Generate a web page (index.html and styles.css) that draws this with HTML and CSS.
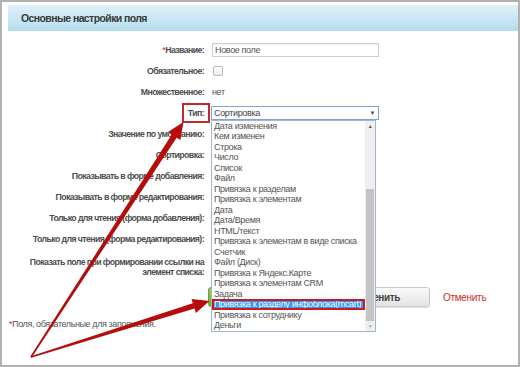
FILE: index.html
```html
<!DOCTYPE html>
<html lang="ru">
<head>
    <meta charset="UTF-8">
    <title>Основные настройки поля</title>
    <link rel="stylesheet" href="styles.css">
</head>
<body>
    <div class="frame">
        <div class="head">Основные настройки поля</div>

        <div class="form">
            <div class="row">
                <div class="label"><span class="req">*</span>Название:</div>
                <div class="value"><div class="input">Новое поле</div></div>
            </div>
            <div class="row">
                <div class="label">Обязательное:</div>
                <div class="value"><span class="check"></span></div>
            </div>
            <div class="row">
                <div class="label">Множественное:</div>
                <div class="value plain">нет</div>
            </div>
            <div class="row">
                <div class="label"><span class="mark">Тип:</span></div>
                <div class="value">
                    <div class="select">
                        <span>Сортировка</span><span class="caret">&#9660;</span>
                        <div class="list">
                            <div class="opts">
                                <div>Дата изменения</div>
                                <div>Кем изменен</div>
                                <div>Строка</div>
                                <div>Число</div>
                                <div>Список</div>
                                <div>Файл</div>
                                <div>Привязка к разделам</div>
                                <div>Привязка к элементам</div>
                                <div>Дата</div>
                                <div>Дата/Время</div>
                                <div>HTML/текст</div>
                                <div>Привязка к элементам в виде списка</div>
                                <div>Счетчик</div>
                                <div>Файл (Диск)</div>
                                <div>Привязка к Яндекс.Карте</div>
                                <div>Привязка к элементам CRM</div>
                                <div>Задача</div>
                                <div class="picked">Привязка к разделу инфоблока(mcart)</div>
                                <div>Привязка к сотруднику</div>
                                <div>Деньги</div>
                            </div>
                            <div class="scroll">
                                <div class="arr">&#9650;</div>
                                <div class="track"><div class="thumb"></div></div>
                                <div class="arr down">&#9660;</div>
                            </div>
                        </div>
                    </div>
                </div>
            </div>
            <div class="row">
                <div class="label">Значение по умолчанию:</div>
                <div class="value"></div>
            </div>
            <div class="row">
                <div class="label">Сортировка:</div>
                <div class="value"></div>
            </div>
            <div class="row">
                <div class="label">Показывать в форме добавления:</div>
                <div class="value"></div>
            </div>
            <div class="row">
                <div class="label">Показывать в форме редактирования:</div>
                <div class="value"></div>
            </div>
            <div class="row">
                <div class="label">Только для чтения (форма добавления):</div>
                <div class="value"></div>
            </div>
            <div class="row">
                <div class="label">Только для чтения (форма редактирования):</div>
                <div class="value"></div>
            </div>
            <div class="row tall">
                <div class="label">Показать поле при формировании ссылки на<br>элемент списка:</div>
                <div class="value"></div>
            </div>
        </div>

        <div class="buttons">
            <button class="btn save">Сохранить</button>
            <button class="btn apply">Применить</button>
            <a class="cancel" href="#">Отменить</a>
        </div>

        <div class="note"><span class="req">*</span>Поля, обязательные для заполнения.</div>

        <!-- red pointers drawn over the form -->
        <svg class="arrows" width="520" height="367" viewBox="0 0 520 367">
            <polygon fill="#b70c0c" points="30.3,356.6 31.7,357.4 176.6,137.7 180.4,140.1 183.5,122 168.0,132.1 171.8,134.5"/>
            <polygon fill="#b70c0c" points="30.8,356.2 31.2,357.8 194.6,308.6 195.9,313.0 209.5,301 191.5,299.0 192.8,303.2"/>
        </svg>
    </div>
</body>
</html>
```

FILE: styles.css
```css
body {
    margin: 0;
    font-family: "Liberation Sans", Arial, sans-serif;
    background: #fff;
}
.frame {
    position: relative;
    width: 520px;
    height: 367px;
    box-sizing: border-box;
    border: 2px solid #b2b2b2;
    overflow: hidden;
}
.head {
    margin: 3px 0 0 6px;
    height: 26px;
    line-height: 26px;
    padding-left: 13px;
    background: linear-gradient(#dff1f9, #b4ddef);
    font-size: 10.5px;
    font-weight: bold;
    letter-spacing: -0.6px;
    color: #3a3a3a;
}
.form {
    margin-top: 8px;
}
.row {
    display: flex;
    align-items: center;
    height: 21px;
}
.row.tall {
    height: 36px;
}
.label {
    width: 202px;
    flex-shrink: 0;
    text-align: right;
    font-size: 8.75px;
    font-weight: bold;
    letter-spacing: -0.6px;
    color: #4e4e4e;
    line-height: 10px;
    white-space: nowrap;
}
.value {
    margin-left: 8px;
    font-size: 9px;
    letter-spacing: -0.35px;
    color: #555;
}
.req {
    color: #d42020;
    font-weight: normal;
}
.input {
    width: 163px;
    height: 12px;
    line-height: 12px;
    border: 1px solid #cfcfcf;
    box-shadow: inset 0 1px 1px #eee;
    padding-left: 2px;
    color: #555;
}
.check {
    display: block;
    width: 8px;
    height: 8px;
    margin-left: 1px;
    border: 1px solid #b9b9b9;
    border-radius: 2px;
    background: linear-gradient(#fff, #ececec);
}
.mark {
    display: inline-block;
    border: 2px solid #c2272d;
    padding: 3px 4px 3px 4px;
    margin-right: -6px;
}
.select {
    position: relative;
    margin-left: -1px;
    width: 164px;
    height: 12px;
    line-height: 12px;
    border: 1px solid #7aa6d6;
    padding-left: 2px;
    display: flex;
    justify-content: space-between;
    color: #444;
}
.caret {
    font-size: 6px;
    color: #444;
    padding-right: 3px;
}
.list {
    position: absolute;
    top: 13px;
    left: -1px;
    width: 163px;
    height: 210px;
    border: 1px solid #9fb7d4;
    background: #fff;
    display: flex;
    z-index: 2;
}
.opts {
    flex: 1;
    min-width: 0;
    overflow: hidden;
    font-size: 9px;
    letter-spacing: -0.35px;
    line-height: 10.5px;
    color: #555;
}
.opts div {
    padding-left: 2px;
    white-space: nowrap;
}
.opts .picked {
    background: #3395f6;
    color: #fff;
    outline: 2px solid #cc1a1a;
    outline-offset: -2px;
}
.scroll {
    width: 10px;
    flex-shrink: 0;
    background: #efefef;
    display: flex;
    flex-direction: column;
}
.arr {
    height: 10px;
    font-size: 5px;
    line-height: 10px;
    text-align: center;
    color: #555;
}
.arr.down {
    color: #aaa;
}
.track {
    flex: 1;
}
.thumb {
    margin: 58px 1px 0 1px;
    height: 132px;
    background: #c4c4c4;
}
.buttons {
    display: flex;
    align-items: center;
    margin: 2px 0 0 206px;
}
.btn {
    height: 20px;
    border-radius: 3px;
    font-family: "Liberation Sans", Arial, sans-serif;
    font-size: 10px;
    font-weight: bold;
    letter-spacing: -0.4px;
    padding: 0;
    cursor: pointer;
}
.save {
    width: 102px;
    border: 1px solid #6f9f27;
    background: linear-gradient(#9fd14f, #72ad22);
    color: #fff;
}
.apply {
    width: 112px;
    margin-left: 8px;
    border: 1px solid #c9c9c9;
    background: linear-gradient(#fafafa, #e3e3e3);
    box-shadow: 0 1px 1px #ddd;
    color: #444;
}
.cancel {
    margin-left: 13px;
    font-size: 10px;
    letter-spacing: -0.3px;
    color: #d42a2a;
    text-decoration: none;
}
.note {
    margin: 12px 0 0 7px;
    font-size: 9px;
    letter-spacing: -0.4px;
    color: #555;
}
.arrows {
    position: absolute;
    top: -2px;
    left: -2px;
    pointer-events: none;
    z-index: 3;
}
```
